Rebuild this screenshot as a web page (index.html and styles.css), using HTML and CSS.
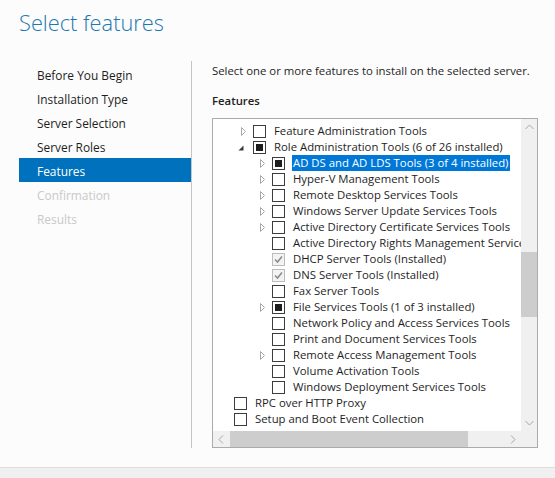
FILE: index.html
```html
<!DOCTYPE html>
<html lang="en">
<head>
<meta charset="utf-8">
<title>Select features</title>
<link rel="stylesheet" href="styles.css">
</head>
<body>
<div class="wizard">
  <h1 class="title">Select features</h1>
  <div class="main">
    <nav class="steps">
      <div class="step">Before You Begin</div>
      <div class="step">Installation Type</div>
      <div class="step">Server Selection</div>
      <div class="step">Server Roles</div>
      <div class="step active">Features</div>
      <div class="step disabled">Confirmation</div>
      <div class="step disabled">Results</div>
    </nav>
    <section class="content">
      <p class="intro">Select one or more features to install on the selected server.</p>
      <h2 class="label">Features</h2>
      <div class="tree-box">
        <div class="tree-view">
          <div class="tree-list">
            <div class="row l1"><span class="exp"><svg width="5" height="9" viewBox="0 0 5 9"><path d="M0.5 0.5 L4.5 4.5 L0.5 8.5 Z" fill="none" stroke="#a8a8a8"/></svg></span><span class="cb"></span><span class="txt">Feature Administration Tools</span></div>
            <div class="row l1"><span class="exp open"><svg width="6" height="6" viewBox="0 0 6 6"><path d="M5.5 0.5 L5.5 5.5 L0.5 5.5 Z" fill="#3a3a3a"/></svg></span><span class="cb ind"></span><span class="txt">Role Administration Tools (6 of 26 installed)</span></div>
            <div class="row l2"><span class="exp"><svg width="5" height="9" viewBox="0 0 5 9"><path d="M0.5 0.5 L4.5 4.5 L0.5 8.5 Z" fill="none" stroke="#a8a8a8"/></svg></span><span class="cb ind"></span><span class="txt sel">AD DS and AD LDS Tools (3 of 4 installed)</span></div>
            <div class="row l2"><span class="exp"><svg width="5" height="9" viewBox="0 0 5 9"><path d="M0.5 0.5 L4.5 4.5 L0.5 8.5 Z" fill="none" stroke="#a8a8a8"/></svg></span><span class="cb"></span><span class="txt">Hyper-V Management Tools</span></div>
            <div class="row l2"><span class="exp"><svg width="5" height="9" viewBox="0 0 5 9"><path d="M0.5 0.5 L4.5 4.5 L0.5 8.5 Z" fill="none" stroke="#a8a8a8"/></svg></span><span class="cb"></span><span class="txt">Remote Desktop Services Tools</span></div>
            <div class="row l2"><span class="exp"><svg width="5" height="9" viewBox="0 0 5 9"><path d="M0.5 0.5 L4.5 4.5 L0.5 8.5 Z" fill="none" stroke="#a8a8a8"/></svg></span><span class="cb"></span><span class="txt">Windows Server Update Services Tools</span></div>
            <div class="row l2"><span class="exp"><svg width="5" height="9" viewBox="0 0 5 9"><path d="M0.5 0.5 L4.5 4.5 L0.5 8.5 Z" fill="none" stroke="#a8a8a8"/></svg></span><span class="cb"></span><span class="txt">Active Directory Certificate Services Tools</span></div>
            <div class="row l2"><span class="exp"></span><span class="cb"></span><span class="txt">Active Directory Rights Management Services Tools</span></div>
            <div class="row l2"><span class="exp"></span><span class="cb done"><svg width="11" height="11" viewBox="0 0 11 11"><path d="M2 5.5 L4.5 8 L9 2.5" fill="none" stroke="#8c8c8c" stroke-width="1.6"/></svg></span><span class="txt">DHCP Server Tools (Installed)</span></div>
            <div class="row l2"><span class="exp"></span><span class="cb done"><svg width="11" height="11" viewBox="0 0 11 11"><path d="M2 5.5 L4.5 8 L9 2.5" fill="none" stroke="#8c8c8c" stroke-width="1.6"/></svg></span><span class="txt">DNS Server Tools (Installed)</span></div>
            <div class="row l2"><span class="exp"></span><span class="cb"></span><span class="txt">Fax Server Tools</span></div>
            <div class="row l2"><span class="exp"><svg width="5" height="9" viewBox="0 0 5 9"><path d="M0.5 0.5 L4.5 4.5 L0.5 8.5 Z" fill="none" stroke="#a8a8a8"/></svg></span><span class="cb ind"></span><span class="txt">File Services Tools (1 of 3 installed)</span></div>
            <div class="row l2"><span class="exp"></span><span class="cb"></span><span class="txt">Network Policy and Access Services Tools</span></div>
            <div class="row l2"><span class="exp"></span><span class="cb"></span><span class="txt">Print and Document Services Tools</span></div>
            <div class="row l2"><span class="exp"><svg width="5" height="9" viewBox="0 0 5 9"><path d="M0.5 0.5 L4.5 4.5 L0.5 8.5 Z" fill="none" stroke="#a8a8a8"/></svg></span><span class="cb"></span><span class="txt">Remote Access Management Tools</span></div>
            <div class="row l2"><span class="exp"></span><span class="cb"></span><span class="txt">Volume Activation Tools</span></div>
            <div class="row l2"><span class="exp"></span><span class="cb"></span><span class="txt">Windows Deployment Services Tools</span></div>
            <div class="row l0"><span class="exp"></span><span class="cb"></span><span class="txt">RPC over HTTP Proxy</span></div>
            <div class="row l0"><span class="exp"></span><span class="cb"></span><span class="txt">Setup and Boot Event Collection</span></div>
          </div>
        </div>
        <div class="vscroll">
          <span class="arrow"><svg width="9" height="6" viewBox="0 0 9 6"><path d="M0.5 5 L4.5 1 L8.5 5" fill="none" stroke="#a6a6a6"/></svg></span>
          <span class="vtrack"><span class="vthumb"></span></span>
          <span class="arrow"><svg width="9" height="6" viewBox="0 0 9 6"><path d="M0.5 1 L4.5 5 L8.5 1" fill="none" stroke="#a6a6a6"/></svg></span>
        </div>
        <div class="hscroll">
          <span class="arrow"><svg width="6" height="9" viewBox="0 0 6 9"><path d="M5 0.5 L1 4.5 L5 8.5" fill="none" stroke="#a6a6a6"/></svg></span>
          <span class="htrack"><span class="hthumb"></span></span>
          <span class="arrow"><svg width="6" height="9" viewBox="0 0 6 9"><path d="M1 0.5 L5 4.5 L1 8.5" fill="none" stroke="#a6a6a6"/></svg></span>
        </div>
        <div class="corner"></div>
      </div>
    </section>
  </div>
</div>
<footer class="bottom"></footer>
</body>
</html>
```

FILE: styles.css
```css
* { box-sizing: border-box; }
html, body { margin: 0; padding: 0; }
body {
  width: 555px;
  height: 478px;
  overflow: hidden;
  background: #fcfcfc;
  font-family: "Segoe UI", "Open Sans", "Noto Sans", sans-serif;
  font-size: 11.35px;
  color: #1e1e1e;
  display: flex;
  flex-direction: column;
}
.wizard { flex: 1; display: flex; flex-direction: column; }
.title {
  margin: 0;
  height: 61px;
  padding: 7px 0 0 19px;
  font-size: 21.8px;
  font-weight: 300;
  line-height: 32px;
  color: #1c78b1;
}
.main { display: flex; height: 387px; }
.steps {
  width: 173px;
  margin-left: 19px;
  border-right: 1px solid #c6c6c6;
  padding-top: 1px;
  font-size: 11.9px;
}
.step { height: 24px; line-height: 24px; padding: 1px 0 0 18px; white-space: nowrap; }
.step.active { background: #0072bd; color: #fff; }
.step.disabled { color: #c9c9c9; }
.content { margin-left: 20px; display: flex; flex-direction: column; }
.intro { margin: 2px 0 0; line-height: 16px; white-space: nowrap; }
.label { margin: 14px 0 0; font-size: 11.35px; font-weight: 600; line-height: 16px; }
.tree-box {
  margin-top: 9px;
  width: 326px;
  height: 330px;
  border: 1px solid #ababab;
  background: #fff;
  display: grid;
  grid-template-columns: 1fr 16px;
  grid-template-rows: 1fr 16px;
}
.tree-view { overflow: hidden; padding-top: 4px; }
.tree-list { height: 303px; overflow: hidden; }
.row {
  display: flex;
  align-items: center;
  height: 16px;
  white-space: nowrap;
  line-height: 16px;
}
.row.l0 { padding-left: 2px; }
.row.l1 { padding-left: 21px; }
.row.l2 { padding-left: 40px; }
.exp { width: 19px; height: 16px; flex: none; display: flex; align-items: center; padding-left: 7px; }
.exp.open { padding-left: 4px; padding-top: 2px; }
.exp svg { display: block; }
.cb {
  width: 13px;
  height: 13px;
  flex: none;
  border: 1px solid #3c3c3c;
  background: #fff;
  margin-right: 7px;
  display: flex;
  align-items: center;
  justify-content: center;
}
.cb.ind::after { content: ""; width: 7px; height: 7px; background: #1e1e1e; }
.cb.done { border-color: #bcbcbc; background: #f3f3f3; }
.txt { padding: 0 2px 0 1px; color: #1e1e1e; }
.txt.sel { background: #0078d7; color: #fff; }
.vscroll, .hscroll { background: #f0f0f0; display: flex; }
.vscroll { flex-direction: column; }
.arrow { width: 16px; height: 16px; flex: none; display: flex; align-items: center; justify-content: center; }
.vtrack { flex: 1; padding-top: 117px; }
.vthumb { display: block; height: 65px; background: #cdcdcd; }
.htrack { flex: 1; padding-left: 1px; }
.hthumb { display: block; width: 238px; height: 16px; background: #cdcdcd; }
.corner { background: #f0f0f0; }
.bottom { height: 11px; flex: none; border-top: 1px solid #dedede; background: #f0f0f0; }
```
